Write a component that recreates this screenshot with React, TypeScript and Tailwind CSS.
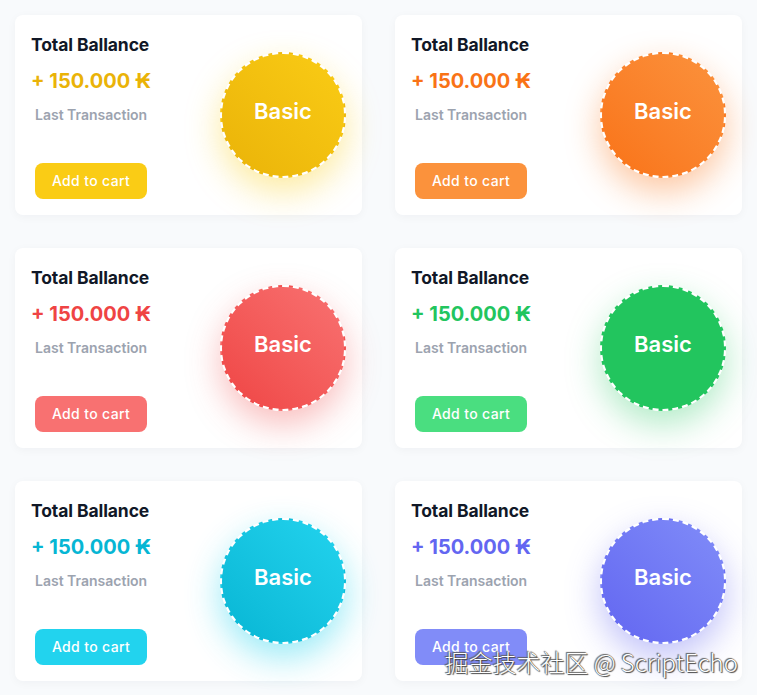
import type { ReactNode } from "react";

// tailwind v3 palette hexes — v4's oklch colours came out too saturated
const CARDS = [
  {
    amount: "text-[#eab308]",
    button: "bg-[#facc15]",
    circle: "bg-gradient-to-bl from-[#facc15] to-[#eab308] shadow-[0_14px_34px_rgba(250,204,21,0.4)]",
  },
  {
    amount: "text-[#f97316]",
    button: "bg-[#fb923c]",
    circle: "bg-gradient-to-bl from-[#fb923c] to-[#f97316] shadow-[0_14px_34px_rgba(249,115,22,0.4)]",
  },
  {
    amount: "text-[#ef4444]",
    button: "bg-[#f87171]",
    circle: "bg-gradient-to-bl from-[#f87171] to-[#ef4444] shadow-[0_14px_34px_rgba(239,68,68,0.35)]",
  },
  {
    amount: "text-[#22c55e]",
    button: "bg-[#4ade80]",
    circle: "bg-gradient-to-bl from-[#22c55e] to-[#22c55e] shadow-[0_14px_34px_rgba(34,197,94,0.35)]",
  },
  {
    amount: "text-[#06b6d4]",
    button: "bg-[#22d3ee]",
    circle: "bg-gradient-to-bl from-[#22d3ee] to-[#06b6d4] shadow-[0_14px_34px_rgba(34,211,238,0.45)]",
  },
  {
    amount: "text-[#6366f1]",
    button: "bg-[#818cf8]",
    circle: "bg-gradient-to-bl from-[#818cf8] to-[#6366f1] shadow-[0_14px_34px_rgba(99,102,241,0.4)]",
  },
];

function Card({ amount, button, circle }: { amount: string; button: string; circle: string }) {
  return (
    <div className="flex h-[200px] items-center justify-between rounded-lg bg-white px-4 shadow-[0_2px_10px_rgba(15,23,42,0.04)]">
      <div className="flex h-full flex-col pt-4 pb-4">
        <h3 className="text-[17.5px] leading-7 font-bold tracking-[-0.1px] text-[#111827]">Total Ballance</h3>
        <p className={`mt-2 text-[20px] leading-7 font-bold ${amount}`}>+ 150.000 ₭</p>
        <p className="mt-[10px] ml-1 text-sm leading-5 font-semibold text-[#9ca3af]">Last Transaction</p>
        <button
          className={`mt-auto ml-1 flex h-9 w-28 items-center justify-center rounded-lg text-sm font-medium tracking-wide text-white ${button}`}
        >
          Add to cart
        </button>
      </div>
      <div
        className={`flex h-[126px] w-[126px] items-center justify-center rounded-full border-2 border-dashed border-white pb-2 ${circle}`}
      >
        <span className="text-[22px] font-semibold text-white">Basic</span>
      </div>
    </div>
  );
}

function Watermark({ children }: { children: ReactNode }) {
  return (
    <div
      className="pointer-events-none absolute right-[19px] bottom-[20px] text-[24px] leading-7 font-light text-white"
      style={{
        fontFamily: '"Noto Sans CJK SC", "Noto Sans", sans-serif',
        textShadow: "0 0 1px #333, 1px 1px 1px #444, -1px -1px 1px #666",
      }}
    >
      {children}
    </div>
  );
}

export default function App() {
  return (
    <main
      className="relative min-h-screen bg-[#f8fafc] p-[15px]"
      style={{ fontFamily: "Inter, 'Noto Sans', sans-serif" }}
    >
      <div className="grid grid-cols-2 gap-[33px]">
        {CARDS.map((c, i) => (
          <Card key={i} {...c} />
        ))}
      </div>
      <Watermark>掘金技术社区 @ ScriptEcho</Watermark>
    </main>
  );
}
